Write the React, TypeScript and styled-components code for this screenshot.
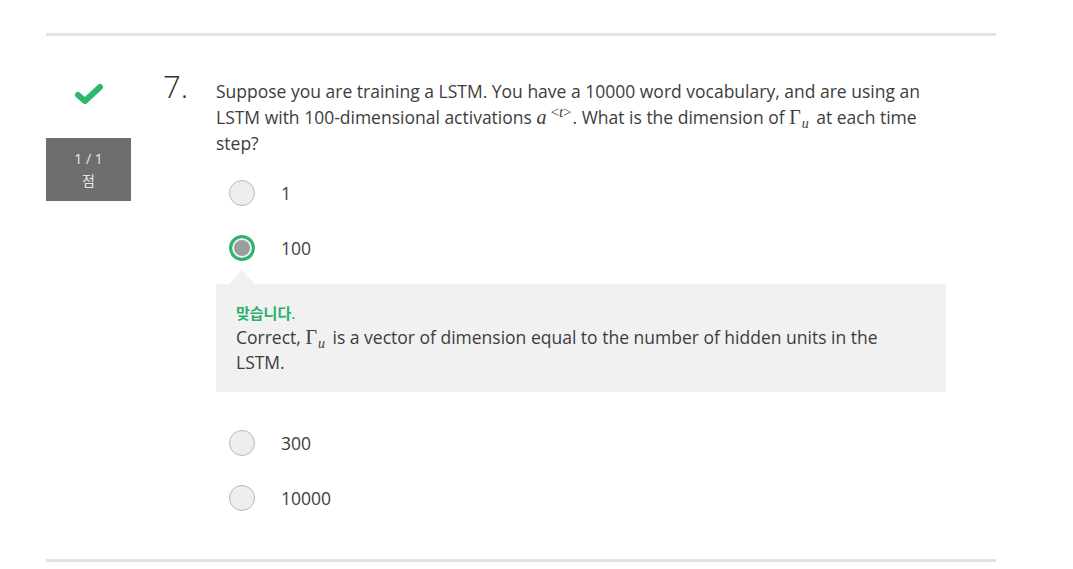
import React from "react";
import styled, { createGlobalStyle } from "styled-components";

const GlobalStyle = createGlobalStyle`
  body {
    margin: 0;
    background: #fff;
    font-family: "Open Sans", "Noto Sans CJK KR", sans-serif;
    color: #3d3d3d;
  }
`;

const Page = styled.div`
  width: 950px;
  margin-left: 46px;
  padding-top: 33px;
`;

const Rule = styled.div`
  height: 3px;
  background: #e2e2e2;
`;

const QuestionRow = styled.div`
  display: grid;
  grid-template-columns: 85px 85px 730px;
  padding-top: 40px;
  padding-bottom: 19px;
`;

const Side = styled.div`
  display: flex;
  flex-direction: column;
  align-items: center;
`;

const Check = styled.svg`
  width: 30px;
  height: 24px;
  margin-top: 6px;
`;

const Score = styled.div`
  align-self: stretch;
  margin-top: 32px;
  height: 63px;
  background: #6e6e6e;
  color: #e8e8e8;
  font-size: 14px;
  line-height: 22px;
  display: flex;
  flex-direction: column;
  align-items: center;
  justify-content: center;
`;

const Number = styled.div`
  padding-left: 32px;
  margin-top: -5px;
  font-size: 31px;
  font-weight: 300;
  line-height: 1;
  color: #333;
`;

const Body = styled.div`
  display: flex;
  flex-direction: column;
`;

const Prompt = styled.div`
  margin-top: 2px;
  max-width: 712px;
  font-size: 17.5px;
  line-height: 26px;
  color: #3d3d3d;
`;

const MathVar = styled.span`
  font-family: "Liberation Serif", "DejaVu Serif", serif;
  font-style: italic;
  font-size: 20px;
`;

const MathOp = styled.span`
  font-family: "Liberation Serif", "DejaVu Serif", serif;
  font-size: 20px;
`;

const Sup = styled.sup`
  font-family: "Liberation Serif", "DejaVu Serif", serif;
  font-size: 15px;
  line-height: 0;
  vertical-align: 7px;
  margin-left: 4px;
  margin-right: 1px;
`;

const Sub = styled.sub`
  font-family: "Liberation Serif", "DejaVu Serif", serif;
  font-style: italic;
  font-size: 14px;
  line-height: 0;
  vertical-align: -4px;
  margin-left: 1px;
  margin-right: 3px;
`;

const Options = styled.div`
  display: flex;
  flex-direction: column;
  margin-top: 24px;
`;

const Option = styled.div`
  display: flex;
  align-items: center;
  height: 26px;
  padding-left: 13px;
  margin-bottom: 29px;
  font-size: 17.5px;
  color: #3d3d3d;
`;

const Radio = styled.span<{ $checked?: boolean }>`
  box-sizing: border-box;
  width: 26px;
  height: 26px;
  border-radius: 50%;
  margin-right: 26px;
  flex: none;
  ${(p) =>
    p.$checked
      ? `
    border: 3px solid #2fb46f;
    background: #9d9d9d;
    box-shadow: inset 0 0 0 2px #f2f2f2;
  `
      : `
    border: 1px solid #b9b9b9;
    background: #eeeeee;
  `}
`;

const Feedback = styled.div`
  position: relative;
  margin-top: -6px;
  margin-bottom: 38px;
  background: #f1f1f1;
  padding: 17px 40px 17px 20px;
  &::before {
    content: "";
    position: absolute;
    top: -14px;
    left: 13px;
    border-left: 13px solid transparent;
    border-right: 13px solid transparent;
    border-bottom: 14px solid #f1f1f1;
  }
`;

const Verdict = styled.div`
  font-size: 15px;
  font-weight: 600;
  line-height: 24px;
  color: #2ab06a;
`;

const Explain = styled.div`
  font-size: 17.5px;
  line-height: 25px;
  color: #3d3d3d;
`;

const Gamma = () => (
  <>
    <MathOp>Γ</MathOp>
    <Sub>u</Sub>
  </>
);

const App: React.FC = () => {
  return (
    <Page>
      <GlobalStyle />
      <Rule />
      <QuestionRow>
        <Side>
          <Check viewBox="0 0 30 24">
            <polyline
              points="4,13 11,19 26,5"
              fill="none"
              stroke="#2db86e"
              strokeWidth="6"
              strokeLinecap="round"
              strokeLinejoin="round"
            />
          </Check>
          <Score>
            <span>1 / 1</span>
            <span>점</span>
          </Score>
        </Side>
        <Number>7.</Number>
        <Body>
          <Prompt>
            Suppose you are training a LSTM. You have a 10000 word vocabulary, and are using an LSTM
            with 100-dimensional activations <MathVar>a</MathVar>
            <Sup>
              &lt;<i>t</i>&gt;
            </Sup>
            . What is the dimension of <Gamma /> at each time step?
          </Prompt>
          <Options>
            <Option>
              <Radio />1
            </Option>
            <Option>
              <Radio $checked />
              100
            </Option>
            <Feedback>
              <Verdict>맞습니다.</Verdict>
              <Explain>
                Correct, <Gamma /> is a vector of dimension equal to the number of hidden units in
                the LSTM.
              </Explain>
            </Feedback>
            <Option>
              <Radio />
              300
            </Option>
            <Option>
              <Radio />
              10000
            </Option>
          </Options>
        </Body>
      </QuestionRow>
      <Rule />
    </Page>
  );
};

export default App;
